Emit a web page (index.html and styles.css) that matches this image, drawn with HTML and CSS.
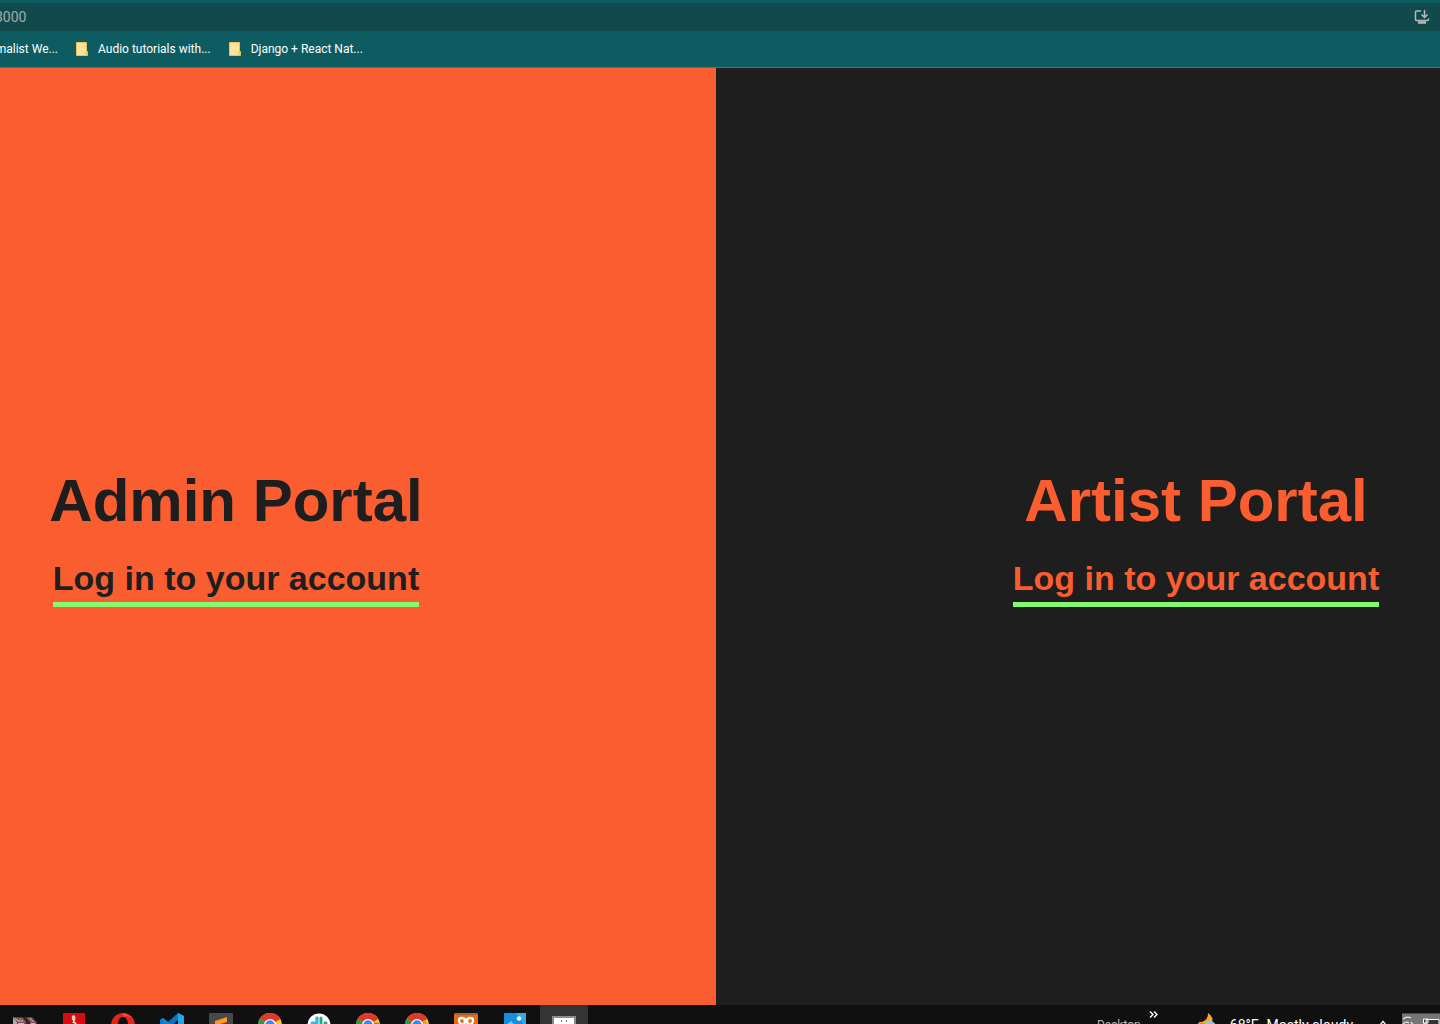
FILE: index.html
```html
<!DOCTYPE html>
<html lang="en">
<head>
<meta charset="utf-8">
<title>Portal</title>
<link rel="stylesheet" href="styles.css">
</head>
<body>
<header class="browser">
  <div class="address-bar">
    <input class="address" type="text" value="3000" aria-label="Address">
    <button class="install" aria-label="Install app">
      <svg width="16" height="16" viewBox="0 0 16 16" fill="none" stroke="#b4bcbd" stroke-width="1.5"><path d="M7 2H2.500Q1.500 2 1.500 3V10.500Q1.500 11.500 2.500 11.500H13.500Q14.500 11.500 14.500 10.500V9.500M10.500 1V8M7.500 5.500L10.500 8.500L13.500 5.500"/><path d="M4 13.500H12" stroke-width="2.500"/></svg>
    </button>
  </div>
  <nav class="bookmarks">
    <a class="bookmark bookmark-cut" href="#">malist We...</a>
    <a class="bookmark" href="#"><svg class="folder" width="12" height="14" viewBox="0 0 12 14"><path d="M.5 .5H10.500V9.500H11.500V13.500H.500Z" fill="#fde29b" stroke="#eec04f"/><path d="M9 13V10H11V13Z" fill="#f4cf6a"/></svg>Audio tutorials with...</a>
    <a class="bookmark" href="#"><svg class="folder" width="12" height="14" viewBox="0 0 12 14"><path d="M.5 .5H10.500V9.500H11.500V13.500H.500Z" fill="#fde29b" stroke="#eec04f"/><path d="M9 13V10H11V13Z" fill="#f4cf6a"/></svg>Django + React Nat...</a>
  </nav>
</header>
<main class="portals">
  <section class="portal admin">
    <h1 class="title">Admin Portal</h1>
    <a class="login" href="#">Log in to your account</a>
  </section>
  <section class="portal artist">
    <h1 class="title">Artist Portal</h1>
    <a class="login" href="#">Log in to your account</a>
  </section>
</main>
<footer class="taskbar">
  <svg class="symbols" width="0" height="0" aria-hidden="true">
    <symbol id="chrome" viewBox="0 0 24 24">
      <circle cx="12" cy="12" r="12" fill="#f9c63a"/>
      <path d="M12 12L1.600 6A12 12 0 0 1 22.400 6Z" fill="#dc3b2b"/>
      <path d="M12 12L1.600 6A12 12 0 0 0 12 24Z" fill="#2a9a4b"/>
      <path d="M12 6H22.400A12 12 0 0 0 12 0Z" fill="#dc3b2b"/>
      <circle cx="12" cy="12" r="6" fill="#fff"/><circle cx="12" cy="12" r="4.700" fill="#3f86e8"/>
    </symbol>
  </svg>
  <div class="apps">
    <button class="app" aria-label="WinRAR"><svg width="24" height="24" viewBox="0 0 24 24"><path d="M0 4H19L24 9V20H4L0 15Z" fill="#6b3a37"/><path d="M1 5H18L22 9H5Z" fill="#8b6055"/><path d="M0 4L4 9V20L0 15Z" fill="#b8a7a0"/><path d="M5 9H23V12H5Z" fill="#7d4c72"/><path d="M9 4L13 9V20H17V9L13 4Z" fill="#34251f"/><path d="M2 5L5 8H10M17 5L21 9M5 10.500H11M18 10.500H22" fill="none" stroke="#c9b9a9"/></svg></button>
    <button class="app" aria-label="Adobe Reader"><svg width="22" height="24" viewBox="0 0 22 24"><path d="M0 0H22V24H0Z" fill="#d50c10"/><path d="M10 10C12 7 12 3 10.500 3C8.500 3 10 8 13 11C8 14 6 17 5 18" fill="none" stroke="#f6d5bf" stroke-width="1.700"/></svg></button>
    <button class="app" aria-label="Opera"><svg width="24" height="24" viewBox="0 0 24 24"><path fill-rule="evenodd" d="M12 0A12 12 0 1 0 12 24A12 12 0 1 0 12 0ZM12 4C15.500 4 17 8 17 12S15.500 20 12 20S7 16 7 12S8.500 4 12 4Z" fill="#e1251b"/><path d="M12 0Q19 1 22 6Q18 2 12 4Z" fill="#f04a3c"/></svg></button>
    <button class="app" aria-label="Visual Studio Code"><svg width="24" height="24" viewBox="0 0 24 24"><path d="M18 0L24 3V21L18 24L8 15L3 19L0 17V7L3 5L8 9ZM18 7L12 12L18 17Z" fill="#0877c2"/><path d="M18 0L24 3V21L18 24Z" fill="#25a5ea"/><path d="M0 7L3 5L18 17V24Z" fill="#0d83cf"/></svg></button>
    <button class="app" aria-label="Sublime Text"><svg width="24" height="24" viewBox="0 0 24 24"><rect width="24" height="24" rx="1" fill="#484848"/><path d="M6 8L18 4V9L11 11L18 13V18L6 22V17L14 14L6 12Z" fill="#ff981b"/></svg></button>
    <button class="app" aria-label="Chrome"><svg width="24" height="24"><use href="#chrome"/></svg></button>
    <button class="app" aria-label="Slack"><svg width="24" height="24" viewBox="0 0 24 24"><circle cx="12" cy="12" r="11.500" fill="#fff"/><g stroke-width="3" stroke-linecap="round"><path d="M5 10H9M10 5V5.500" stroke="#36b9dc"/><path d="M10 5V10" stroke="#36b9dc"/><path d="M14 5V10M19 10H18" stroke="#2fa877"/><path d="M14 14H19M14 19V18" stroke="#e7b33d"/><path d="M10 14V19M5 14H6" stroke="#d72e62"/></g></svg></button>
    <button class="app" aria-label="Chrome, second window"><svg width="24" height="24" viewBox="0 0 24 24"><use href="#chrome"/><path d="M18 10Q20 9 23 10V24H17Z" fill="#a7773c"/></svg></button>
    <button class="app" aria-label="Chrome, third window"><svg width="24" height="24" viewBox="0 0 24 24"><use href="#chrome"/><path d="M18 8L20 7L23 12L18 12Z" fill="#d9a22f"/></svg></button>
    <button class="app" aria-label="XAMPP"><svg width="24" height="24" viewBox="0 0 24 24"><rect width="24" height="24" rx="2" fill="#e66a19"/><path d="M1 1H23" stroke="#a66335" stroke-width="2"/><path d="M5 9V7Q5 5 8 5T11 8T8 12H5M19 9V7Q19 5 16 5T13 8T16 12H19M5 12H8Q11 12 11 15T8 19H5M19 12H16Q13 12 13 15T16 19H19M5 9L8 12M19 9L16 12" fill="none" stroke="#fff" stroke-width="2.400"/></svg></button>
    <button class="app" aria-label="Photos"><svg width="22" height="24" viewBox="0 0 22 24"><rect width="22" height="22" rx="1" fill="#168ddf"/><path d="M12 0H22V15Z" fill="#36a8ed"/><path d="M0 14L7 8L20 22H0Z" fill="#78ccef"/><circle cx="15" cy="5.500" r="2.200" fill="#fff"/></svg></button>
    <button class="app app-active" aria-label="Snipping window"><svg width="24" height="24" viewBox="0 0 24 24"><path d="M1 4H23V21H1Z" fill="#fff" stroke="#8c8c8c" stroke-width="2"/><path d="M9.500 7V9M14.500 7V9" stroke="#777"/></svg></button>
  </div>
  <div class="tray">
    <span class="desktop">Desktop</span>
    <button class="more" aria-label="More toolbars"><svg width="9" height="7" viewBox="0 0 9 7" fill="none" stroke="#fff" stroke-width="1.400"><path d="M1 .5L4 3.500L1 6.500M5 .5L8 3.500L5 6.500"/></svg></button>
    <button class="weather"><svg class="moon" width="24" height="24" viewBox="0 0 24 24"><path d="M10 0Q16 4 14 9Q12 16 0 13L1 9Q10 9 10 0Z" fill="#f3a63a"/><path d="M0 10Q5 9 8 12V16H0Z" fill="#ed7d24"/><circle cx="12" cy="14" r="6" fill="#83c6e8"/></svg><span class="temperature">68°F</span><span>Mostly cloudy</span></button>
    <button class="chevron" aria-label="Show hidden icons"><svg width="8" height="6" viewBox="0 0 8 6"><path d="M1 5L4 1.500L7 5" fill="none" stroke="#ddd" stroke-width="1.500"/></svg></button>
    <div class="network"><svg width="38" height="24" viewBox="0 0 38 24"><path d="M0 0H38V24H0Z" fill="#747676"/><path d="M0 .5H38" stroke="#504645"/><path d="M1 6Q5 3 9 5M1 11Q4 8 7 10M9 9L12 13" fill="none" stroke="#e6e6e6" stroke-width="1.300"/><path d="M24 6.500H37V18H24ZM21.500 6V10H26V6ZM22 10V20" fill="#333" stroke="#fff"/></svg></div>
  </div>
</footer>
</body>
</html>
```
FILE: styles.css
```css
* { box-sizing: border-box; }
body {
  margin: 0;
  height: 100vh;
  display: flex;
  flex-direction: column;
  overflow: hidden;
  background: #1e1e1e;
  font-family: "Liberation Sans", Arial, sans-serif;
}
button { border: 0; padding: 0; background: none; color: inherit; font: inherit; }
svg { display: block; flex: none; }
a { text-decoration: none; }

.browser {
  background: #0d5c61;
  border-bottom: 1px solid #3d7c7e;
  padding-top: 3px;
  font-family: Roboto, sans-serif;
}
.address-bar {
  display: flex;
  align-items: center;
  height: 28px;
  padding-right: 10px;
  background: #11494d;
}
.address {
  flex: 1;
  min-width: 0;
  border: 0;
  padding: 0;
  background: none;
  color: #a5acab;
  font: 14px/20px Roboto, sans-serif;
  text-indent: -5px;
}
.bookmarks {
  display: flex;
  align-items: center;
  gap: 18px;
  height: 36px;
}
.bookmark {
  display: flex;
  align-items: center;
  gap: 10px;
  color: #fff;
  font-size: 12px;
  line-height: 16px;
  white-space: nowrap;
}
.bookmark-cut { width: 58px; justify-content: flex-end; }

.portals { flex: 1; display: flex; min-height: 0; }
.portal {
  display: flex;
  flex-direction: column;
  align-items: center;
  justify-content: center;
  gap: 23px;
}
.admin { width: 716px; padding-right: 244px; background: #fa5d2f; color: #1e1e1e; }
.artist { flex: 1; padding-left: 236px; background: #1e1e1e; color: #fa5d2f; }
.title { margin: 0; font-size: 60px; line-height: 70px; white-space: nowrap; }
.login {
  padding-bottom: 4px;
  border-bottom: 5px solid #86f973;
  color: inherit;
  font-size: 34px;
  font-weight: bold;
  line-height: 39px;
  white-space: nowrap;
}

.taskbar {
  display: flex;
  justify-content: space-between;
  height: 19px;
  padding-left: 1px;
  overflow: hidden;
  background: #101010;
  color: #fff;
}
.symbols { display: none; }
.apps { display: flex; gap: 1px; }
.app {
  display: flex;
  justify-content: center;
  width: 48px;
  height: 40px;
  padding-top: 8px;
}
.app-active { background: #343434; }
.tray {
  display: flex;
  align-items: flex-start;
  height: 40px;
  font-family: Roboto, sans-serif;
}
.desktop { padding-top: 12px; color: #b8b8b8; font-size: 12px; line-height: 16px; }
.more { padding: 6px 40px 0 8px; }
.weather {
  display: flex;
  gap: 8px;
  padding-top: 11px;
  font-size: 14px;
  line-height: 18px;
}
.moon { margin-top: -3px; }
.chevron { padding: 15px 15px 0 26px; }
.network { padding-top: 8px; }
```
